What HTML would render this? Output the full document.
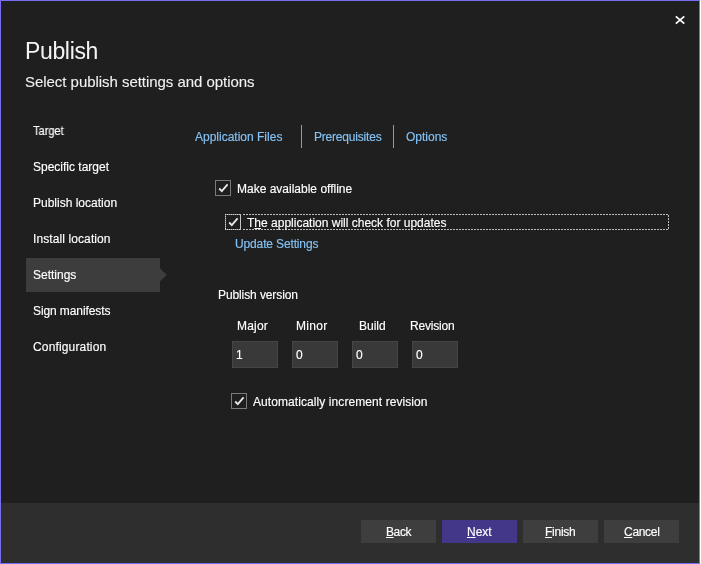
<!DOCTYPE html>
<html>
<head>
<meta charset="utf-8">
<style>
html,body{margin:0;padding:0;width:701px;height:564px;overflow:hidden;background:#ffffff;}
body{font-family:"Liberation Sans",sans-serif;-webkit-font-smoothing:antialiased;}
#win{position:absolute;left:0;top:0;width:700px;height:564px;background:#1f1f1f;}
#bt{position:absolute;left:0;top:0;width:700px;height:1px;background:#7b6cf5;}
#bb{position:absolute;left:0;top:563px;width:700px;height:1px;background:#7b6cf5;}
#bl{position:absolute;left:0;top:0;width:1px;height:564px;background:#7b6cf5;}
#br{position:absolute;left:699px;top:0;width:1px;height:564px;background:#7b6cf5;}
#footer{position:absolute;left:1px;top:503px;width:698px;height:60px;background:#2e2e2e;}
.t{will-change:transform;position:absolute;white-space:nowrap;line-height:12px;font-size:12px;color:#ffffff;-webkit-text-stroke:0.15px #ffffff;}
.lk{color:#84c2f4;-webkit-text-stroke:0.15px #84c2f4;}
#title{will-change:transform;position:absolute;left:25px;top:40px;font-size:23px;line-height:23px;letter-spacing:-0.35px;color:#f4f4f4;white-space:nowrap;}
#sub{will-change:transform;position:absolute;left:25px;letter-spacing:-0.04px;top:74px;font-size:15px;line-height:15px;color:#f2f2f2;white-space:nowrap;-webkit-text-stroke:0.1px #f2f2f2;}
#sel{position:absolute;left:26px;top:258px;width:134px;height:34px;background:#3d3d3d;}
#selarr{position:absolute;left:160px;top:269px;width:0;height:0;border-top:6px solid transparent;border-bottom:6px solid transparent;border-left:6px solid #3d3d3d;}
.sep{position:absolute;top:125px;width:1px;height:23px;background:#9a9a9a;}
.cb{position:absolute;width:14px;height:14px;border:1px solid #7a7a7a;}
.tb{position:absolute;top:341px;width:44px;height:25px;background:#393939;border:1px solid #454545;}
.btn{position:absolute;top:520px;width:75px;height:23px;background:#3e3e3e;}
.btn.primary{background:#43378a;}
.u{text-decoration:underline;}
svg{position:absolute;}
</style>
</head>
<body>
<div id="win">
  <div id="footer"></div>
  <div id="bt"></div><div id="bb"></div><div id="bl"></div><div id="br"></div>

  <svg style="left:670px;top:10px" width="20" height="20" viewBox="0 0 20 20">
    <path d="M5.8 6.3 L14.3 13.7 M14.3 6.3 L5.8 13.7" stroke="#ffffff" stroke-width="1.7" fill="none"/>
  </svg>

  <div id="title">Publish</div>
  <div id="sub">Select publish settings and options</div>

  <div id="sel"></div><svg style="left:160px;top:268px" width="8" height="14" viewBox="0 0 8 14"><polygon points="0,0.2 6.7,6.9 0,13.6" fill="#3d3d3d"/></svg>
  <div class="t" style="left:33px;top:125px;transform:scaleX(0.92);transform-origin:0 0">Target</div>
  <div class="t" style="left:33px;top:161px">Specific target</div>
  <div class="t" style="left:33px;top:197px">Publish location</div>
  <div class="t" style="left:33px;top:233px;letter-spacing:0.1px">Install location</div>
  <div class="t" style="left:33px;top:269px">Settings</div>
  <div class="t" style="left:33px;top:305px;letter-spacing:-0.1px">Sign manifests</div>
  <div class="t" style="left:33px;top:341px;letter-spacing:0.15px">Configuration</div>

  <div class="t lk" style="left:195px;top:131px">Application Files</div>
  <div class="sep" style="left:301px"></div>
  <div class="t lk" style="left:314px;top:131px;letter-spacing:-0.2px">Prerequisites</div>
  <div class="sep" style="left:393px"></div>
  <div class="t lk" style="left:406px;top:131px">Options</div>

  <div class="cb" style="left:215px;top:180px"></div>
  <svg style="left:215px;top:180px" width="16" height="16" viewBox="0 0 16 16"><path d="M4.2 8.5 L6.8 11.1 L12.6 4.4" stroke="#e8e8e8" stroke-width="1.8" fill="none"/></svg>
  <div class="t" style="left:237px;top:183px">Make available offline</div>

  <svg style="left:225px;top:214px" width="445" height="17" viewBox="0 0 445 17" shape-rendering="crispEdges">
    <path d="M0 0.5 H16 M0 15.5 H16 M0.5 0 V16" stroke="#7a7a7a" stroke-width="1" fill="none"/>
    <path d="M0 0.5 H16 M0 15.5 H16 M0.5 0 V16" stroke="#d4d4d4" stroke-width="1" stroke-dasharray="1 1" fill="none"/>
    <path d="M15.5 0 V16" stroke="#c4c4c4" stroke-width="1" fill="none"/>
    <path d="M18 0.5 H443 M18 15.5 H443" stroke="#bebebe" stroke-width="1" stroke-dasharray="2 1" fill="none"/>
    <path d="M443.5 1 V15" stroke="#bebebe" stroke-width="1" stroke-dasharray="2 1" fill="none"/>
  </svg>
  <svg style="left:225px;top:214px" width="16" height="16" viewBox="0 0 16 16"><path d="M4.2 8.5 L6.8 11.1 L12.6 4.4" stroke="#e8e8e8" stroke-width="1.8" fill="none"/></svg>
  <div class="t" style="left:247px;top:217px">T<span class="u">h</span>e application will check for updates</div>

  <div class="t lk" style="left:235px;top:238px;letter-spacing:-0.14px">Update Settings</div>

  <div class="t" style="left:218px;top:289px;letter-spacing:-0.1px">Publish version</div>

  <div class="t" style="left:237px;top:320px;letter-spacing:0.2px">Major</div>
  <div class="t" style="left:296px;top:320px;letter-spacing:0.3px">Minor</div>
  <div class="t" style="left:359px;top:320px">Build</div>
  <div class="t" style="left:410px;top:320px;letter-spacing:-0.2px">Revision</div>

  <div class="tb" style="left:232px"></div>
  <div class="tb" style="left:292px"></div>
  <div class="tb" style="left:352px"></div>
  <div class="tb" style="left:412px"></div>
  <div class="t" style="left:236px;top:349px">1</div>
  <div class="t" style="left:296px;top:349px">0</div>
  <div class="t" style="left:356px;top:349px">0</div>
  <div class="t" style="left:416px;top:349px">0</div>

  <div class="cb" style="left:231px;top:393px"></div>
  <svg style="left:231px;top:393px" width="16" height="16" viewBox="0 0 16 16"><path d="M4.2 8.5 L6.8 11.1 L12.6 4.4" stroke="#e8e8e8" stroke-width="1.8" fill="none"/></svg>
  <div class="t" style="left:253px;top:396px;letter-spacing:0.08px">Automatically increment revision</div>

  <div class="btn" style="left:361px"></div>
  <div class="btn primary" style="left:442px"></div>
  <div class="btn" style="left:523px"></div>
  <div class="btn" style="left:604px"></div>
  <div class="t" style="left:386px;top:526px;letter-spacing:-0.4px"><span class="u">B</span>ack</div>
  <div class="t" style="left:467px;top:526px"><span class="u">N</span>ext</div>
  <div class="t" style="left:545px;top:526px;letter-spacing:-0.25px"><span class="u">F</span>inish</div>
  <div class="t" style="left:624px;top:526px;letter-spacing:-0.3px"><span class="u">C</span>ancel</div>
</div>
</body>
</html>
